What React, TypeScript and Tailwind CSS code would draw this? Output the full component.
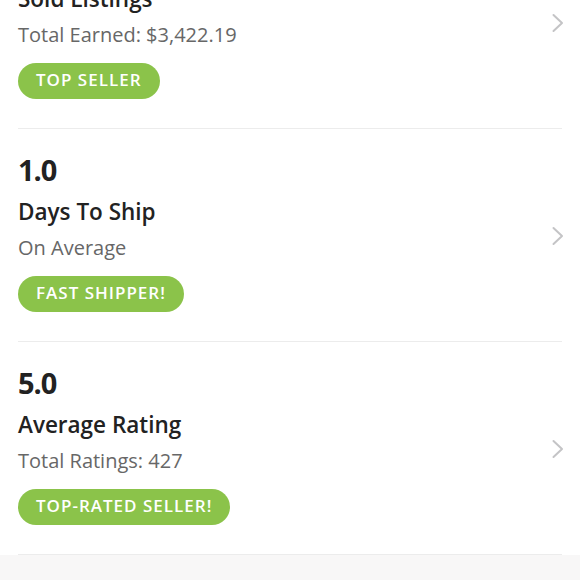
import React from 'react';

type Stat = {
  value?: string;
  title: string;
  subtitle: string;
  badge: string;
};

const stats: Stat[] = [
  { title: 'Sold Listings', subtitle: 'Total Earned: $3,422.19', badge: 'Top Seller' },
  { value: '1.0', title: 'Days To Ship', subtitle: 'On Average', badge: 'Fast Shipper!' },
  { value: '5.0', title: 'Average Rating', subtitle: 'Total Ratings: 427', badge: 'Top-Rated Seller!' },
];

function Chevron() {
  return (
    <svg width="14" height="20" viewBox="0 0 14 20" className="shrink-0 self-center -mr-[3px] mt-[2px]">
      <polyline points="2.5,2 11,10 2.5,18" fill="none" stroke="#c4c4c6" strokeWidth="2" strokeLinecap="round" strokeLinejoin="round" />
    </svg>
  );
}

function StatRow({ stat, first }: { stat: Stat; first?: boolean }) {
  return (
    <div className={`mx-[18px] flex h-[213px] border-b border-[#ececec] ${first ? '-mt-[84px]' : ''}`}>
      <div className={`flex-1 ${first ? 'pt-[69px]' : 'pt-[24px]'}`}>
        {stat.value && (
          <div className="text-[29px] leading-[34px] font-bold text-[#222222] mb-[11px] tracking-[-1px]">{stat.value}</div>
        )}
        <div className="text-[22.5px] leading-[28px] font-semibold text-[#222222]">{stat.title}</div>
        <div className="mt-[9px] text-[20px] leading-[26px] text-[#676767]">{stat.subtitle}</div>
        <div className="mt-[15px] inline-flex h-[36px] items-center rounded-full bg-[#8bc34a] px-[18px] pb-[2px] text-[17px] font-semibold uppercase tracking-[1px] text-white">
          {stat.badge}
        </div>
      </div>
      <Chevron />
    </div>
  );
}

export default function App() {
  return (
    <div className="w-[580px] h-[580px] overflow-hidden bg-white flex flex-col" style={{ fontFamily: '"Open Sans", Lato, sans-serif' }}>
      <div className="bg-white">
        {stats.map((s, i) => (
          <StatRow key={s.title} stat={s} first={i === 0} />
        ))}
      </div>
      <div className="flex-1 bg-[#f8f7f7]" />
    </div>
  );
}
